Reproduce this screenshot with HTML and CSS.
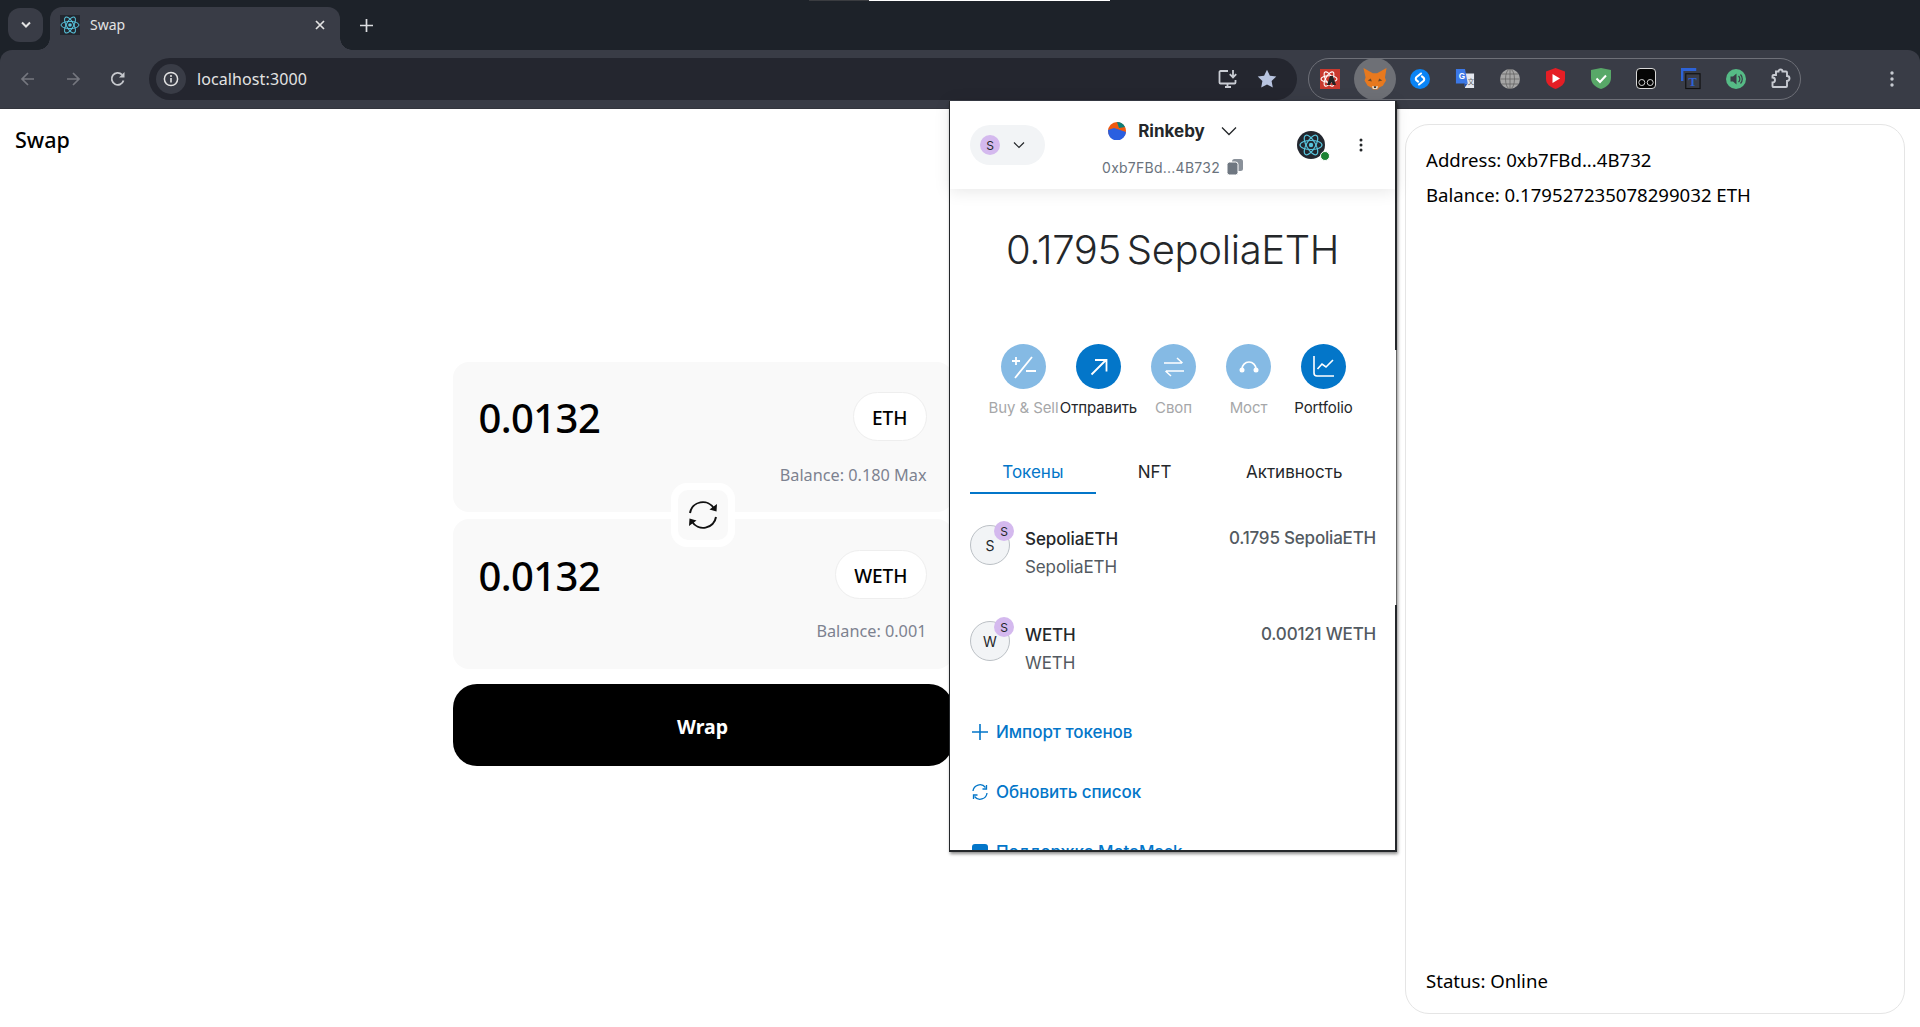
FILE: index.html
```html
<!DOCTYPE html>
<html lang="en">
<head>
<meta charset="utf-8">
<title>Swap</title>
<link rel="stylesheet" href="styles.css">
</head>
<body>
<header class="chrome">
  <div class="capture-strip"><span class="strip-dark"></span><span class="strip-light"></span></div>
  <div class="tabstrip">
    <div class="tab-search"><svg width="12" height="8" viewBox="0 0 12 8"><path d="M2 1.500 6 5.500 10 1.500" fill="none" stroke="#e3e3e3" stroke-width="2"/></svg></div>
    <div class="tab">
      <svg class="favicon" width="20" height="20" viewBox="0 0 20 20"><rect width="20" height="20" fill="#23272f"/><g fill="none" stroke="#58c4dc" stroke-width="1"><ellipse cx="10" cy="10" rx="9" ry="3.600"/><ellipse cx="10" cy="10" rx="9" ry="3.600" transform="rotate(60 10 10)"/><ellipse cx="10" cy="10" rx="9" ry="3.600" transform="rotate(120 10 10)"/></g><circle cx="10" cy="10" r="1.800" fill="#58c4dc"/></svg>
      <span class="tab-title">Swap</span>
      <svg class="tab-close" width="10" height="10" viewBox="0 0 10 10"><path d="M1 1 9 9M9 1 1 9" stroke="#e3e3e3" stroke-width="1.700"/></svg>
    </div>
    <svg class="new-tab" width="13" height="13" viewBox="0 0 13 13"><path d="M6.500 0V13M0 6.500H13" stroke="#dcdde0" stroke-width="1.700"/></svg>
  </div>
  <div class="toolbar">
    <svg class="nav" width="16" height="16" viewBox="0 0 16 16"><path d="M14 8H2.500M8 2 2 8l6 6" fill="none" stroke="#75777f" stroke-width="1.700"/></svg>
    <svg class="nav" width="16" height="16" viewBox="0 0 16 16"><path d="M2 8h11.500M8 2l6 6-6 6" fill="none" stroke="#75777f" stroke-width="1.700"/></svg>
    <svg class="nav" width="16" height="16" viewBox="0 0 16 16"><path d="M13.500 9.500A6 6 0 1 1 12 3.600" fill="none" stroke="#c7c9ce" stroke-width="1.800"/><path d="M14.500 1v5.500H9z" fill="#c7c9ce"/></svg>
    <div class="omnibox">
      <div class="site-info"><svg width="16" height="16" viewBox="0 0 16 16"><circle cx="8" cy="8" r="6.600" fill="none" stroke="#e3e3e3" stroke-width="1.500"/><path d="M8 7v4.400" stroke="#e3e3e3" stroke-width="1.600"/><circle cx="8" cy="4.900" r="1" fill="#e3e3e3"/></svg></div>
      <span class="url">localhost:3000</span>
      <svg class="omni-install" width="22" height="20" viewBox="0 0 22 20"><path d="M10 2H2.500a1 1 0 0 0-1 1v10.500a1 1 0 0 0 1 1h14a1 1 0 0 0 1-1V11M7 18h6M9.500 15v3" fill="none" stroke="#c9ccd3" stroke-width="1.800"/><path d="M15 1v7M11.800 5.200 15 8.500l3.200-3.300" fill="none" stroke="#c9ccd3" stroke-width="1.800"/></svg>
      <svg class="omni-star" width="20" height="19" viewBox="0 0 20 19"><path d="M10 .8 12.900 6.800l6.400.8-4.700 4.500 1.200 6.400L10 15.400l-5.800 3.100 1.200-6.400L.7 7.600l6.400-.8z" fill="#b8c4e0"/></svg>
    </div>
    <div class="extensions">
      <span class="ext"><svg width="20" height="20" viewBox="0 0 20 20"><rect width="20" height="20" fill="#c9392e"/><g fill="none" stroke="#fff" stroke-width="1.100"><ellipse cx="9" cy="10" rx="8" ry="3.300"/><ellipse cx="9" cy="10" rx="8" ry="3.300" transform="rotate(60 9 10)"/><ellipse cx="9" cy="10" rx="8" ry="3.300" transform="rotate(120 9 10)"/></g><path d="M10 7h3l3 9h-3l-1.500-3-1.500 3H7z" fill="#222"/></svg></span>
      <span class="ext ext-active"><svg width="24" height="22" viewBox="0 0 22 21"><path d="M0 0 9 5h4l9-5-1.500 9 1 3-3 5-3.500 1.500-1.500 2H9l-1.500-2L4 17l-3-5 1-3z" fill="#e8791e"/><path d="M7 10 4 12l4 1zM15 10l3 2-4 1z" fill="#6d4a2b"/><path d="M8 17.500h6l-1 2.500H9z" fill="#e8dccb"/><path d="M10 17.500h2v1.500h-2z" fill="#222"/></svg></span>
      <span class="ext"><svg width="20" height="20" viewBox="0 0 20 20"><circle cx="10" cy="10" r="10" fill="#0a84f5"/><path d="M11 4.500 6.600 8a2.200 2.200 0 0 0 0 3.400l1.500 1.200M9 15.500l4.400-3.500a2.200 2.200 0 0 0 0-3.400l-1.500-1.200" fill="none" stroke="#fff" stroke-width="2.100" stroke-linecap="round"/></svg></span>
      <span class="ext"><svg width="22" height="22" viewBox="0 0 22 22"><path d="M10 5h11v16H11z" fill="#e4e7ee"/><path d="M1 0h10l3 16H1z" fill="#3b78e7"/><path d="M10 16h4l-3 4z" fill="#1f4fb0"/><text class="ext-g" x="4" y="10.500">G</text><text class="ext-x" x="14" y="17">文</text></svg></span>
      <span class="ext"><svg width="20" height="20" viewBox="0 0 20 20"><circle cx="10" cy="10" r="10" fill="#a5a5a5"/><g fill="none" stroke="#666" stroke-width=".8"><ellipse cx="10" cy="10" rx="4.500" ry="10"/><path d="M10 0v20M0 10h20M1.500 5h17M1.500 15h17"/></g></svg></span>
      <span class="ext"><svg width="19" height="21" viewBox="0 0 19 21"><path d="M9.500 0 19 3.500V11c0 5-4 8-9.500 10C4 19 0 16 0 11V3.500z" fill="#e51e25"/><path d="M6.500 6 14 10.500 6.500 15z" fill="#fff"/></svg></span>
      <span class="ext"><svg width="20" height="21" viewBox="0 0 20 21"><path d="M0 2 10 0l10 2v8c0 5-4 9-10 11C4 19 0 15 0 10z" fill="#58a868"/><path d="M5.500 10.500 9 14l6-6.500" fill="none" stroke="#fff" stroke-width="2"/></svg></span>
      <span class="ext"><svg width="20" height="21" viewBox="0 0 20 21"><rect x=".5" y=".5" width="19" height="20" rx="3.500" fill="#050505" stroke="#d9d9d9"/><circle cx="5.800" cy="14.500" r="3" fill="none" stroke="#d4d4d4"/><circle cx="14.200" cy="14.500" r="3" fill="none" stroke="#d4d4d4"/></svg></span>
      <span class="ext"><svg width="21" height="22" viewBox="0 0 21 22"><path d="M1 13V1h15" fill="none" stroke="#2d63d8" stroke-width="3"/><rect x="5" y="5.500" width="15" height="15.500" fill="#3a3d47" stroke="#111" stroke-width="1.200"/><text class="ext-t" x="8" y="18">T</text></svg></span>
      <span class="ext"><svg width="20" height="20" viewBox="0 0 20 20"><circle cx="10" cy="10" r="10" fill="#56bb86"/><path d="M4.500 7.500H7l3.500-3v11L7 12.500H4.500z" fill="#3a3d47"/><path d="M12.500 7a4 4 0 0 1 0 6M14.500 5.500a6.500 6.500 0 0 1 0 9" fill="none" stroke="#3a3d47" stroke-width="1.200"/></svg></span>
      <span class="ext"><svg width="20" height="21" viewBox="0 0 20 21"><path d="M5 3.500h2.500a2 2 0 0 1 4 0H15a1 1 0 0 1 1 1V8a2.500 2.500 0 0 1 0 5v5a1 1 0 0 1-1 1H2.500a1 1 0 0 1-1-1v-3.500a2.500 2.500 0 0 0 0-5V8a1 1 0 0 1 1-1H5z" fill="none" stroke="#c7cad1" stroke-width="1.900"/></svg></span>
    </div>
    <svg class="kebab" width="4" height="16" viewBox="0 0 4 16"><circle cx="2" cy="2" r="1.700" fill="#c7cad1"/><circle cx="2" cy="8" r="1.700" fill="#c7cad1"/><circle cx="2" cy="14" r="1.700" fill="#c7cad1"/></svg>
  </div>
</header>

<main class="page">
  <section class="app">
    <h1 class="app-title">Swap</h1>
    <div class="swap">
      <div class="card">
        <div class="card-row"><span class="amount">0.0132</span><span class="token-pill">ETH</span></div>
        <div class="balance">Balance: 0.180 Max</div>
      </div>
      <div class="card">
        <div class="card-row"><span class="amount">0.0132</span><span class="token-pill">WETH</span></div>
        <div class="balance">Balance: 0.001</div>
      </div>
      <div class="flip"><div class="flip-inner"><svg width="32" height="32" viewBox="0 0 32 32"><path d="M3 14A13 13 0 0 1 27 9.500M29 18A13 13 0 0 1 5 22.500" fill="none" stroke="#111" stroke-width="2"/><path d="M30 5 29.500 12.500 22.500 10.500zM2 27l.5-7.500 7 2z" fill="#111"/></svg></div></div>
      <button class="wrap-btn">Wrap</button>
    </div>
  </section>
  <aside class="status-panel">
    <div>
      <p class="status-line">Address: 0xb7FBd...4B732</p>
      <p class="status-line">Balance: 0.179527235078299032 ETH</p>
    </div>
    <p class="status-line">Status: Online</p>
  </aside>
</main>

<div class="wallet">
  <div class="wallet-head">
    <div class="acct-pill"><span class="avatar-s">S</span><svg width="14" height="8" viewBox="0 0 14 8"><path d="M2 1.500 7 6.500l5-5" fill="none" stroke="#24272a" stroke-width="1.200"/></svg></div>
    <div class="net">
      <div class="net-row">
        <svg width="18" height="18" viewBox="0 0 18 18"><circle cx="9" cy="9" r="9" fill="#f0590f"/><path d="M9 0a9 9 0 0 1 8 5L11 6z" fill="#0d7f78"/><path d="M.4 12 0 8l6-2 12 4a9 9 0 0 1-17.600 2z" fill="#2a5fe0"/></svg>
        <span class="net-name">Rinkeby</span>
        <svg class="net-chev" width="16" height="10" viewBox="0 0 16 10"><path d="M1 1.500 8 8.500l7-7" fill="none" stroke="#24272a" stroke-width="1.300"/></svg>
      </div>
      <div class="addr-row"><span class="addr">0xb7FBd...4B732</span><svg width="16" height="16" viewBox="0 0 16 16"><rect x="5" y="0" width="11" height="12" rx="2.500" fill="#8a919a"/><rect x="0" y="3" width="11" height="13" rx="2.500" stroke="#fff" fill="#6f7781"/></svg></div>
    </div>
    <div class="acct-right">
      <span class="acct-avatar"><svg width="28" height="28" viewBox="0 0 28 28"><circle cx="14" cy="14" r="14" fill="#23272f"/><g fill="none" stroke="#58c4dc" stroke-width="1.200"><ellipse cx="14" cy="14" rx="11" ry="4.500"/><ellipse cx="14" cy="14" rx="11" ry="4.500" transform="rotate(60 14 14)"/><ellipse cx="14" cy="14" rx="11" ry="4.500" transform="rotate(120 14 14)"/></g><circle cx="14" cy="14" r="2.200" fill="#58c4dc"/></svg><span class="online-dot"></span></span>
      <svg width="4" height="14" viewBox="0 0 4 14"><circle cx="2" cy="2" r="1.500" fill="#24272a"/><circle cx="2" cy="7" r="1.500" fill="#24272a"/><circle cx="2" cy="12" r="1.500" fill="#24272a"/></svg>
    </div>
  </div>
  <div class="wallet-scroll">
    <div class="big-balance">0.1795 SepoliaETH</div>
    <div class="actions">
      <div class="action is-dim"><span class="action-circle"><svg width="26" height="26" viewBox="0 0 26 26"><path d="M1 7h8M5 3v8M15 17h10M21 3 4 24" fill="none" stroke="#fff" stroke-width="1.800"/></svg></span><span class="action-label">Buy &amp; Sell</span></div>
      <div class="action"><span class="action-circle"><svg width="18" height="18" viewBox="0 0 18 18"><path d="M1.500 16.500 16 2M5 2h11.500v11.500" fill="none" stroke="#fff" stroke-width="1.800"/></svg></span><span class="action-label">Отправить</span></div>
      <div class="action is-dim"><span class="action-circle"><svg width="20" height="20" viewBox="0 0 20 20"><path d="M0 6h18M13 1l5.500 5M20 14H2M7 19l-5.500-5" fill="none" stroke="#fff" stroke-width="1.500"/></svg></span><span class="action-label">Своп</span></div>
      <div class="action is-dim"><span class="action-circle"><svg width="20" height="12" viewBox="0 0 20 12"><path d="M3 8A7 7 0 0 1 17 8" fill="none" stroke="#fff" stroke-width="1.700"/><circle cx="3" cy="9" r="2.500" fill="#fff"/><circle cx="17" cy="9" r="2.500" fill="#fff"/></svg></span><span class="action-label">Мост</span></div>
      <div class="action"><span class="action-circle"><svg width="21" height="21" viewBox="0 0 21 21"><path d="M1 0v17a3 3 0 0 0 3 3h17" fill="none" stroke="#fff" stroke-width="1.600"/><path d="M4.500 13 9 8l4 3 7-7" fill="none" stroke="#fff" stroke-width="1.600"/></svg></span><span class="action-label">Portfolio</span></div>
    </div>
    <div class="tabs">
      <span class="w-tab w-tab-tokens">Токены</span>
      <span class="w-tab w-tab-nft">NFT</span>
      <span class="w-tab w-tab-activity">Активность</span>
    </div>
    <div class="token">
      <div class="token-icon">S<span class="token-badge">S</span></div>
      <div class="token-names"><div class="token-name">SepoliaETH</div><div class="token-sub">SepoliaETH</div></div>
      <div class="token-amt">0.1795 SepoliaETH</div>
    </div>
    <div class="token">
      <div class="token-icon">W<span class="token-badge">S</span></div>
      <div class="token-names"><div class="token-name">WETH</div><div class="token-sub">WETH</div></div>
      <div class="token-amt">0.00121 WETH</div>
    </div>
    <div class="links">
      <a class="w-link"><svg width="16" height="16" viewBox="0 0 16 16"><path d="M8 0V16M0 8H16" stroke="#0376c9" stroke-width="1.600"/></svg>Импорт токенов</a>
      <a class="w-link"><svg width="16" height="16" viewBox="0 0 16 16"><path d="M1 7A7 7 0 0 1 13.500 3.500M15 9A7 7 0 0 1 2.500 12.500" fill="none" stroke="#0376c9" stroke-width="1.300"/><path d="M14.500 1v4h-4M1.500 15v-4h4" fill="none" stroke="#0376c9" stroke-width="1.300"/></svg>Обновить список</a>
      <a class="w-link"><svg width="16" height="16" viewBox="0 0 16 16"><rect width="16" height="16" rx="3" fill="#0376c9"/></svg>Поддержка MetaMask</a>
    </div>
  </div>
</div>
</body>
</html>
```
FILE: styles.css
```css
* { box-sizing: border-box; }
html, body { margin: 0; height: 100%; }
body { background: #fff; color: #000; font-family: "Noto Sans", sans-serif; overflow: hidden; display: flex; flex-direction: column; height: 1027px; }
p, h1 { margin: 0; }

.chrome { background: #1d2229; height: 109px; flex: none; position: relative; }
.capture-strip { position: absolute; left: 809px; top: 0; display: flex; height: 1px; }
.strip-dark { width: 60px; background: #3a3c40; }
.strip-light { width: 241px; background: #fff; }
.tabstrip { height: 50px; display: flex; align-items: flex-start; padding: 8px 0 0 8px; }
.tab-search { width: 35px; height: 34px; background: #393c46; border-radius: 12px; display: flex; align-items: center; justify-content: center; flex: none; }
.tab { width: 290px; height: 43px; margin: -1px 0 0 7px; background: #393c46; border-radius: 12px 12px 0 0; display: flex; align-items: center; padding: 0 15px 8px 10px; position: relative; flex: none; }
.tab::before, .tab::after { content: ""; position: absolute; bottom: 0; width: 12px; height: 12px; }
.tab::before { left: -12px; background: radial-gradient(circle at 0 0, transparent 11.500px, #393c46 12px); }
.tab::after { right: -12px; background: radial-gradient(circle at 100% 0, transparent 11.500px, #393c46 12px); }
.tab-title { margin-left: 10px; flex: 1; font: 14px "Noto Sans", sans-serif; color: #e3e3e3; }
.favicon { flex: none; }
.new-tab { margin: 11px 0 0 20px; flex: none; }
.toolbar { height: 59px; background: #393c46; border-bottom: 1px solid #33353d; border-radius: 12px 12px 0 0; display: flex; align-items: center; padding: 0 26px 1px 20px; }
.nav { margin-right: 29px; flex: none; }
.omnibox { width: 1148px; margin-left: -6px; height: 42px; background: #24262f; border-radius: 21px; display: flex; align-items: center; padding: 0 6px 0 7px; flex: none; }
.site-info { width: 30px; height: 30px; border-radius: 50%; background: #393c46; display: flex; align-items: center; justify-content: center; flex: none; }
.url { margin-left: 11px; flex: 1; font: 16px "Noto Sans", sans-serif; color: #e3e3e3; letter-spacing: .1px; }
.omni-install { margin-right: 17px; flex: none; }
.omni-star { margin-right: 14px; flex: none; }
.extensions { margin-left: 11px; width: 493px; height: 42px; border: 1px solid #6e7078; border-radius: 21px; display: flex; align-items: center; gap: 25.100px; padding-left: 11px; flex: none; }
.ext { width: 20px; height: 40px; display: flex; align-items: center; justify-content: center; flex: none; }
.ext-active { width: 42px; height: 42px; margin: 0 -11px; background: #6e7076; border-radius: 50%; }
.ext-g { font: bold 9px "Liberation Sans", sans-serif; fill: #fff; }
.ext-x { font: 7px "Noto Sans CJK SC", sans-serif; fill: #666; }
.ext-t { font: bold 13px "Liberation Serif", serif; fill: #2d63d8; }
.kebab { margin-left: auto; flex: none; }

.page { flex: 1; display: flex; min-height: 0; padding: 15px 15px 13px 0; }
.app { flex: 1; min-width: 0; }
.app-title { font-size: 21.500px; font-weight: 500; line-height: 32px; padding-left: 15px; }
.swap { width: 500px; margin: 206px auto 0; position: relative; display: flex; flex-direction: column; }
.card { height: 150px; background: #f9f9f9; border-radius: 16px; padding: 30px 26px 0; margin-bottom: 7px; }
.card + .card { padding-top: 31px; }
.card-row { display: flex; justify-content: space-between; align-items: center; height: 49px; }
.amount { font-size: 40px; font-weight: 500; letter-spacing: -.6px; padding-top: 2px; }
.token-pill { height: 49px; padding: 2px 18px 0; border: 1px solid #eeeeee; border-radius: 24.500px; background: #fff; font-size: 19px; font-weight: 500; display: flex; align-items: center; }
.balance { text-align: right; color: #7d8290; font-size: 16.250px; margin-top: 22px; line-height: 24px; }
.card + .card .balance { margin-top: 20px; }
.flip { position: absolute; left: 218px; top: 121px; width: 64px; height: 64px; background: #fff; border-radius: 16px; padding: 7px; }
.flip-inner { width: 50px; height: 50px; background: #f9f9f9; border-radius: 10px; display: flex; align-items: center; justify-content: center; }
.wrap-btn { height: 82px; margin-top: 8px; padding: 2px 0 0; background: #000; color: #fff; border: 0; border-radius: 24px; font: 700 19.500px "Noto Sans", sans-serif; }
.status-panel { width: 500px; border: 1px solid #e5e5e5; border-radius: 24px; padding: 22px 20px 20px; display: flex; flex-direction: column; justify-content: space-between; font-size: 18.600px; }
.status-line { line-height: 25px; margin-bottom: 10px; }
.status-panel > .status-line { margin-bottom: 0; }

.wallet { position: absolute; left: 949px; top: 101px; width: 448px; height: 751px; background: #fff; border: 1px solid #24272a; border-width: 0 2px 2px 1px; box-shadow: 1px 2px 3px rgba(0,0,0,.45); display: flex; flex-direction: column; font-family: Inter, sans-serif; color: #24272a; }
.wallet::after { content: ""; position: absolute; right: -2px; top: 249px; width: 2px; height: 255px; background: linear-gradient(to right, #fff 1px, #666 1px); }
.wallet-head { height: 88px; flex: none; display: flex; align-items: center; padding: 0 32px 0 20px; box-shadow: 0 2px 16px rgba(0,0,0,.1); position: relative; z-index: 1; background: #fff; }
.acct-pill { width: 75px; height: 40px; border-radius: 20px; background: #f2f4f6; display: flex; align-items: center; gap: 12px; padding-left: 10px; flex: none; }
.avatar-s { width: 20px; height: 20px; border-radius: 50%; background: #d4b9ee; font-size: 12px; display: flex; align-items: center; justify-content: center; }
.net { width: 225px; margin-left: 15px; padding-top: 6px; display: flex; flex-direction: column; align-items: center; flex: none; }
.net-row { display: flex; align-items: center; height: 28px; }
.net-name { font-size: 17px; font-weight: 700; margin: 0 16px 0 12px; }
.addr-row { display: flex; align-items: center; gap: 7px; height: 24px; margin-top: 10px; }
.addr { font-size: 14px; color: #6a737d; letter-spacing: .25px; }
.acct-right { margin-left: auto; display: flex; align-items: center; gap: 34px; }
.acct-avatar { position: relative; width: 28px; height: 28px; display: block; }
.acct-avatar svg { display: block; }
.online-dot { position: absolute; right: -5px; bottom: -2px; width: 10px; height: 10px; border-radius: 50%; background: #1c8234; border: 1px solid #fff; }
.wallet-scroll { flex: 1; min-height: 0; overflow: hidden; }
.big-balance { text-align: center; font-size: 40px; font-weight: 300; margin-top: 33px; line-height: 56px; letter-spacing: -.35px; word-spacing: -5px; }
.actions { display: flex; padding-left: 36px; margin-top: 66px; }
.action { width: 75px; display: flex; flex-direction: column; align-items: center; flex: none; white-space: nowrap; }
.action-circle { width: 45px; height: 45px; border-radius: 50%; background: #0376c9; display: flex; align-items: center; justify-content: center; }
.is-dim .action-circle { background: #85bae4; }
.action-label { font-size: 15px; line-height: 20px; margin-top: 9px; letter-spacing: -.1px; }
.is-dim .action-label { color: #a6a7a9; }
.tabs { display: flex; margin: 35px 20px 0; height: 41px; }
.w-tab { font-size: 17px; line-height: 38px; display: block; text-align: center; }
.w-tab-tokens { width: 126px; color: #0376c9; border-bottom: 2px solid #0376c9; }
.w-tab-nft { width: 118px; }
.w-tab-activity { width: 162px; }
.token { display: flex; height: 96px; padding: 31px 19px 0 20px; }
.token-icon { position: relative; width: 40px; height: 40px; border-radius: 50%; background: #f2f4f6; border: 1px solid #bbc0c5; display: flex; align-items: center; justify-content: center; font-size: 14px; flex: none; }
.token-badge { position: absolute; right: -5px; top: -5px; width: 20px; height: 20px; border-radius: 50%; background: #d4b9ee; font-size: 12px; display: flex; align-items: center; justify-content: center; }
.token-names { margin-left: 15px; flex: 1; }
.token-name { font-size: 17px; font-weight: 500; line-height: 28px; margin-top: 0; letter-spacing: -.1px; }
.token-sub { color: #535a61; font-size: 17px; line-height: 28px; letter-spacing: -.1px; }
.token-amt { color: #535a61; font-size: 17px; font-weight: 500; line-height: 28px; margin-top: -1px; letter-spacing: -.2px; }
.links { padding: 16px 20px 0; display: flex; flex-direction: column; }
.w-link { display: flex; align-items: center; gap: 8px; height: 60px; flex: none; color: #0376c9; font-size: 17px; font-weight: 500; letter-spacing: -.05px; }
.w-link svg { flex: none; margin-left: 2px; }
```
